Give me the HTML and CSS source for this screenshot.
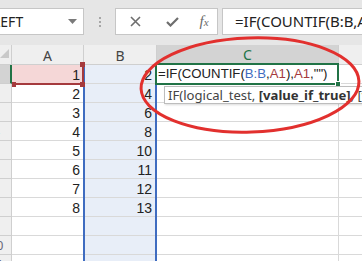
FILE: index.html
```html
<!DOCTYPE html>
<html>
<head>
<meta charset="utf-8">
<link rel="stylesheet" href="styles.css">
</head>
<body>
<div class="app">
  <div class="fbar">
    <div class="namebox">
      <span class="nb-text">LEFT</span>
      <svg class="dd" width="9" height="5" viewBox="0 0 9 5"><path d="M0 0H9L4.5 5Z" fill="#7a7a7a"/></svg>
    </div>
    <div class="grip"><i></i><i></i><i></i></div>
    <div class="btns">
      <span class="btn"><svg width="11" height="11" viewBox="0 0 11 11"><path d="M1 1L10 10M10 1L1 10" stroke="#6e6e6e" stroke-width="1.6" fill="none"/></svg></span>
      <span class="btn"><svg width="13" height="10" viewBox="0 0 13 10"><path d="M1 5L4.5 8.5L12 1" stroke="#6e6e6e" stroke-width="2.2" fill="none"/></svg></span>
      <span class="btn fx">f<sub>x</sub></span>
    </div>
    <div class="finput">=IF(COUNTIF(B:B,A1),A1,"")</div>
  </div>

  <div class="sheet">
    <div class="grid">
      <div class="hd corner"><svg width="9" height="9" viewBox="0 0 9 9"><path d="M9 0V9H0Z" fill="#c9c9c9"/></svg></div>
      <div class="hd col">A</div>
      <div class="hd col">B</div>
      <div class="hd col sel">C</div>
      <div class="hd col"></div>

      <div class="hd row sel">1</div><div class="c a1">1</div><div class="c b">2</div><div class="c"></div><div class="c"></div>
      <div class="hd row">2</div><div class="c">2</div><div class="c b">4</div><div class="c"></div><div class="c"></div>
      <div class="hd row">3</div><div class="c">3</div><div class="c b">6</div><div class="c"></div><div class="c"></div>
      <div class="hd row">4</div><div class="c">4</div><div class="c b">8</div><div class="c"></div><div class="c"></div>
      <div class="hd row">5</div><div class="c">5</div><div class="c b">10</div><div class="c"></div><div class="c"></div>
      <div class="hd row">6</div><div class="c">6</div><div class="c b">11</div><div class="c"></div><div class="c"></div>
      <div class="hd row">7</div><div class="c">7</div><div class="c b">12</div><div class="c"></div><div class="c"></div>
      <div class="hd row">8</div><div class="c">8</div><div class="c b">13</div><div class="c"></div><div class="c"></div>
      <div class="hd row">9</div><div class="c"></div><div class="c b"></div><div class="c"></div><div class="c"></div>
      <div class="hd row">10</div><div class="c"></div><div class="c b"></div><div class="c"></div><div class="c"></div>
      <div class="hd row">11</div><div class="c"></div><div class="c b"></div><div class="c"></div><div class="c"></div>
    </div>

    <div class="ref-b"></div>
    <div class="ref-a"><i class="h tr"></i><i class="h br"></i><i class="h bl"></i></div>
    <div class="active">
      <span class="edit">=IF(COUNTIF(<span class="rb">B:B</span>,<span class="ra">A1</span>),<span class="ra">A1</span>,"")</span>
      <i class="fill"></i>
    </div>
    <div class="tip">IF(logical_test, <b>[value_if_true]</b>, [value_if_false])</div>
  </div>

  <svg class="mark" width="362" height="261" viewBox="0 0 362 261">
    <ellipse cx="250" cy="85" rx="109" ry="47" transform="rotate(-2 250 85)" fill="none" stroke="#e2302e" stroke-width="3"/>
  </svg>
</div>
</body>
</html>
```

FILE: styles.css
```css
* { box-sizing: border-box; }
html, body { margin: 0; padding: 0; background: #fff; }
body { font-family: "Noto Sans", "Open Sans", sans-serif; }

.app {
  position: relative;
  width: 362px;
  height: 261px;
  overflow: hidden;
  background: #fff;
}

/* formula bar */
.fbar {
  height: 45px;
  background: #e6e6e6;
  display: flex;
  align-items: flex-start;
  padding-top: 8px;
}
.namebox {
  margin-left: -20px;
  width: 109px;
  height: 27px;
  background: #fff;
  border: 1px solid #c6c6c6;
  display: flex;
  align-items: center;
  justify-content: space-between;
  padding-left: 12px;
  padding-right: 6px;
  font-size: 14px;
  color: #222;
}
.grip {
  width: 2px;
  margin: 9px 14px 0 15px;
  display: flex;
  flex-direction: column;
  gap: 2px;
}
.grip i { display: block; width: 2px; height: 2px; background: #a6a6a6; }
.btns {
  width: 109px;
  height: 27px;
  background: #fff;
  border: 1px solid #c6c6c6;
  display: grid;
  grid-template-columns: 37px 37px 1fr;
  padding-left: 1px;
  align-items: center;
}
.btn { display: flex; justify-content: center; align-items: center; }
.fx {
  font-family: "Liberation Serif", serif;
  font-style: italic;
  font-size: 15px;
  color: #6a6a6a;
}
.fx sub { font-size: 11px; vertical-align: -1px; }
.finput {
  margin-left: 4px;
  flex: 1 0 auto;
  width: 140px;
  height: 27px;
  background: #fff;
  border: 1px solid #c6c6c6;
  border-right: none;
  padding-left: 12px;
  font-size: 15px;
  line-height: 25px;
  color: #222;
  white-space: nowrap;
  overflow: hidden;
}

/* sheet */
.sheet {
  position: relative;
  margin-left: -18px;
  width: 400px;
}
.grid {
  display: grid;
  grid-template-columns: 30px 72px 73px 182px 41px;
  grid-template-rows: 20px;
  grid-auto-rows: 19px;
}
.hd {
  background: #efefef;
  border-right: 1px solid #cfcfcf;
  border-bottom: 1px solid #cfcfcf;
  color: #444;
  display: flex;
  align-items: center;
  justify-content: center;
}
.corner { align-items: flex-end; justify-content: flex-end; padding: 0 2px 6px 0; }
.col { font-size: 14px; padding-top: 1px; }
.col.sel { background: #d3d3d3; color: #217346; border-bottom: 2px solid #217346; }
.row { font-size: 12px; color: #667; }
.row.sel { background: #d3d3d3; border-right: 2px solid #217346; color: #217346; }
.c {
  border-right: 1px solid #d9d9d9;
  border-bottom: 1px solid #d9d9d9;
  font-family: "Liberation Sans", Arial, sans-serif;
  font-size: 14px;
  color: #222;
  text-align: right;
  padding-right: 3px;
  line-height: 16px;
  display: flex;
  align-items: flex-end;
  justify-content: flex-end;
}
.c.b { background: #e8eef8; padding-right: 4px; }
.c.a1 { background: #f5d7d7; }

/* reference highlights */
.ref-b {
  position: absolute;
  left: 101px;
  top: 19px;
  width: 74px;
  height: 260px;
  border-left: 2px solid #3f6cc0;
  border-right: 2px solid #3f6cc0;
}
.ref-a {
  position: absolute;
  left: 30px;
  top: 19px;
  width: 72px;
  height: 21px;
  border-right: 2px solid #a53a3d;
  border-bottom: 2px solid #a53a3d;
}
.ref-a .h { position: absolute; width: 5px; height: 5px; background: #a53a3d; }
.ref-a .tr { right: -3px; top: -2px; }
.ref-a .br { right: -3px; bottom: -4px; }
.ref-a .bl { left: 0; bottom: -4px; width: 4px; }

.active {
  position: absolute;
  left: 173px;
  top: 18px;
  width: 184px;
  height: 22px;
  border: 2px solid #217346;
  background: #fff;
  padding-left: 1px;
  font-family: "Liberation Sans", Arial, sans-serif;
  font-size: 13.2px;
  line-height: 18px;
  color: #222;
  white-space: nowrap;
}
.edit { display: block; padding-top: 0; }
.rb { color: #3f6cc0; }
.ra { color: #a53a3d; }
.active .fill {
  position: absolute;
  right: -4px;
  bottom: -4px;
  width: 6px;
  height: 6px;
  background: #217346;
  border: 1px solid #fff;
}
.tip {
  position: absolute;
  left: 182px;
  top: 41px;
  height: 18px;
  padding: 0 4px 0 3px;
  background: #fff;
  border: 1px solid #bdbdbd;
  box-shadow: 1px 1px 2px rgba(0,0,0,0.15);
  font-size: 13.1px;
  line-height: 16px;
  color: #444;
  white-space: nowrap;
}
.tip b { color: #333; }

.mark {
  position: absolute;
  left: 0;
  top: 0;
  pointer-events: none;
}
```
